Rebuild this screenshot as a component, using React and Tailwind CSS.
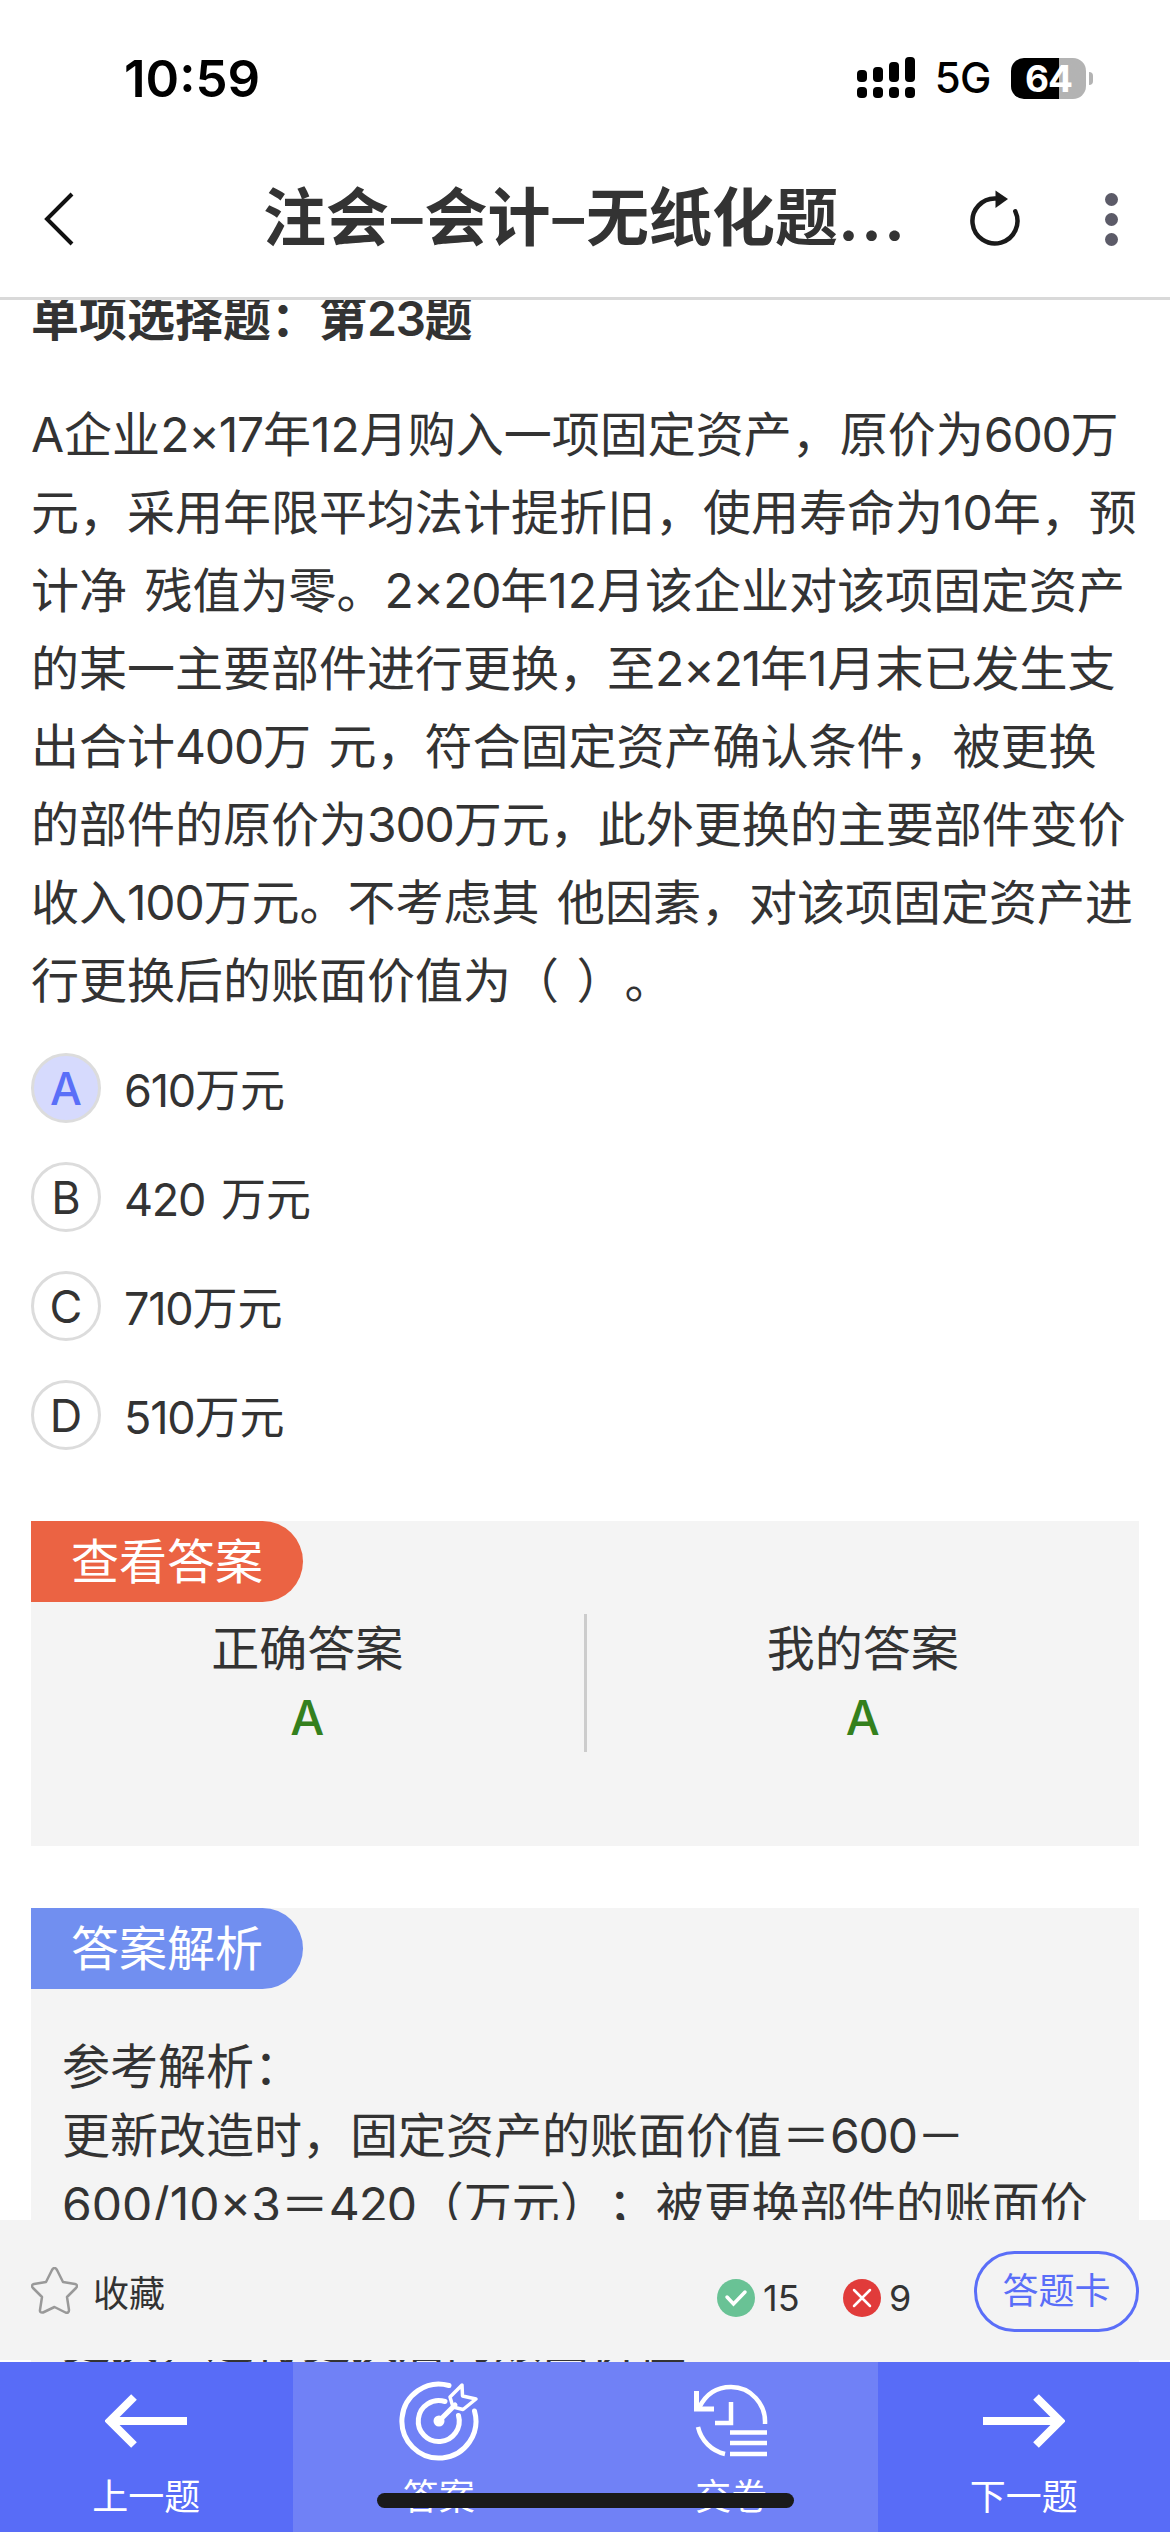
const question = [
  'A企业2×17年12月购入一项固定资产，原价为600万',
  '元，采用年限平均法计提折旧，使用寿命为10年，预',
  '计净 残值为零。2×20年12月该企业对该项固定资产',
  '的某一主要部件进行更换，至2×21年1月末已发生支',
  '出合计400万 元，符合固定资产确认条件，被更换',
  '的部件的原价为300万元，此外更换的主要部件变价',
  '收入100万元。不考虑其 他因素，对该项固定资产进',
  '行更换后的账面价值为（ ）。',
];

const options = [
  { key: 'A', text: '610万元', selected: true },
  { key: 'B', text: '420 万元' },
  { key: 'C', text: '710万元' },
  { key: 'D', text: '510万元' },
];

const analysis = [
  '参考解析：',
  '更新改造时，固定资产的账面价值＝600－',
  '600/10×3＝420（万元）；被更换部件的账面价',
];

// Tightens runs of three or more digits so they sit evenly between Chinese characters.
function Line({ text }) {
  return text.split(/([0-9×/]{3,})/).map((part, i) =>
    i % 2 === 1 && !part.includes('/') ? (
      <span key={i} className="tracking-[-1.2px]">
        {part}
      </span>
    ) : (
      part
    ),
  );
}

function StatusBar() {
  return (
    <div className="flex h-[156px] shrink-0 items-center pl-[124px] pr-[77px]">
      <span className="text-[51px] font-semibold leading-none text-black">10:59</span>
      <svg className="ml-auto" width="60" height="42" viewBox="0 0 60 42">
        <rect x="1" y="13" width="10" height="12" rx="4" />
        <rect x="17" y="10" width="10" height="15" rx="4" />
        <rect x="33" y="5" width="10" height="20" rx="4" />
        <rect x="49" y="0" width="10" height="25" rx="4" />
        <rect x="1" y="30" width="10" height="11" rx="4" />
        <rect x="17" y="30" width="10" height="11" rx="4" />
        <rect x="33" y="30" width="10" height="11" rx="4" />
        <rect x="49" y="30" width="10" height="11" rx="4" />
      </svg>
      <span className="ml-[19px] text-[42px] font-medium leading-none tracking-[-0.5px] text-black">5G</span>
      <div className="ml-[20px] flex h-[41px] w-[75px] items-center justify-center rounded-[13px] bg-linear-to-r from-black from-64% to-[#b3b3b3] to-64% text-[37px] font-bold leading-none tracking-[-1px] text-white">
        64
      </div>
      <div className="ml-[3px] h-[13px] w-1 rounded-r-full bg-[#b3b3b3]" />
    </div>
  );
}

function Header() {
  return (
    <div className="flex h-[144px] shrink-0 items-center border-b-3 border-[#d9d9d9] pb-[15px]">
      <svg className="ml-[42px]" width="34" height="56" viewBox="0 0 34 56" fill="none" stroke="#111" strokeWidth="4">
        <path d="M30 3L5 28l25 25" />
      </svg>
      <h1 className="-mt-1 ml-[187px] w-[651px] whitespace-nowrap text-[63px] font-bold leading-none text-[#333]">
        注会<span className="mx-[2px] font-medium">–</span>会计<span className="mx-[2px] font-medium">–</span>无纸化题
        <span className="tracking-[2px]">...</span>
      </h1>
      <svg className="-mt-2 ml-[51px]" width="60" height="64" viewBox="0 0 60 64" fill="none" stroke="#1a1a1a" strokeWidth="4.5">
        <path d="M50.300 28.400A22.500 22.500 0 1 1 31 15.500" strokeLinecap="round" />
        <path d="M30.500 7.500v17.500l12.500-9z" fill="#1a1a1a" stroke="none" />
      </svg>
      <div className="ml-[80px] flex flex-col gap-[7px]">
        <i className="size-[13px] rounded-full bg-[#5c5b68]" />
        <i className="size-[13px] rounded-full bg-[#5c5b68]" />
        <i className="size-[13px] rounded-full bg-[#5c5b68]" />
      </div>
    </div>
  );
}

function Badge({ className, children }) {
  return (
    <div className={`flex h-[81px] w-[272px] items-center rounded-r-full pl-10 text-[48px] leading-none text-white ${className}`}>
      {children}
    </div>
  );
}

function Result({ label }) {
  return (
    <div className="flex flex-1 flex-col items-center text-[48px]">
      <span className="leading-[69px]">{label}</span>
      <span className="font-[550] leading-[69px] text-[#34801d]">A</span>
    </div>
  );
}

function NavItem({ icon, label, className }) {
  return (
    <div className={`flex flex-1 flex-col items-center text-white ${className}`}>
      <div className="flex h-[117px] items-center">{icon}</div>
      <span className="text-[36px] leading-[36px]">{label}</span>
    </div>
  );
}

const arrowRight = (
  <svg width="82" height="54" viewBox="0 0 82 54" fill="none" stroke="currentColor" strokeWidth="8">
    <path d="M0 27h76M53 3l24 24-24 24" />
  </svg>
);

const arrowLeft = (
  <svg width="82" height="54" viewBox="0 0 82 54" fill="none" stroke="currentColor" strokeWidth="8">
    <path d="M82 27H6M29 3L5 27l24 24" />
  </svg>
);

const targetIcon = (
  <svg width="80" height="80" viewBox="0 0 80 80" fill="none" stroke="currentColor" strokeWidth="5" strokeLinecap="round">
    <path d="M50 4.500A37 37 0 1 0 75.500 30" />
    <path d="M46 20.500A20.500 20.500 0 1 0 59.500 34.500" />
    <path d="M40 40l16-16" />
    <circle cx="40" cy="40" r="5.500" fill="currentColor" stroke="none" />
    <path d="M63 4l.5 11L77 18 64 28.500 54 26 51 16z" strokeWidth="3.500" strokeLinejoin="round" />
  </svg>
);

const submitIcon = (
  <svg width="74" height="74" viewBox="0 0 74 74" fill="none" stroke="currentColor" strokeWidth="4.500">
    <path d="M71 40A34 35 0 0 0 37 3Q15 3 5 24" />
    <path d="M4 43a36 36 0 0 0 27 27" />
    <path d="M2.500 7v18H20" strokeWidth="5" />
    <path d="M37 18v21H21" />
    <path d="M36 48.500h37M36 59h37M36 70h37" />
  </svg>
);

export default function App() {
  return (
    <div className="relative flex h-[2532px] w-[1170px] flex-col overflow-hidden bg-white font-[Inter,'Noto_Sans_CJK_SC',sans-serif] text-[#333] [text-spacing-trim:space-all]">
      <StatusBar />
      <Header />

      <main className="h-[1920px] shrink-0 overflow-hidden px-[31px]">
        <h2 className="-mt-[16px] text-[48px] font-bold leading-[70px]">
          单项选择题：第<span className="font-semibold tracking-[-1.5px]">23</span>题
        </h2>
        <div className="mt-[42px] whitespace-pre text-[48px] leading-[78px] [word-spacing:4px]">
          {question.map((line) => (
            <p key={line}>
              <Line text={line} />
            </p>
          ))}
        </div>

        <div className="mt-[33px] flex flex-col gap-[39px]">
          {options.map((o) => (
            <div key={o.key} className="flex h-[70px] items-center">
              <span
                className={
                  o.selected
                    ? 'flex size-[70px] items-center justify-center rounded-full border-3 border-[#dcdcdc] bg-[#d6dafd] text-[45px] font-[550] leading-none text-[#5a6ff8]'
                    : 'flex size-[70px] items-center justify-center rounded-full border-3 border-[#dcdcdc] text-[45px] leading-none'
                }
              >
                {o.key}
              </span>
              <span className="ml-[23px] pt-1 text-[45px] leading-none [word-spacing:3px]">
                <Line text={o.text} />
              </span>
            </div>
          ))}
        </div>

        <section className="mt-[71px] h-[325px] bg-[#f4f4f4]">
          <Badge className="bg-[#eb6343]">查看答案</Badge>
          <div className="mt-3 flex">
            <Result label="正确答案" />
            <div className="h-[138px] w-[3px] bg-[#ccc]" />
            <Result label="我的答案" />
          </div>
        </section>

        <section className="mt-[62px] bg-[#f4f4f4]">
          <Badge className="bg-[#718ff0]">答案解析</Badge>
          <div className="mt-[43px] whitespace-pre pl-[31px] text-[48px] leading-[69px]">
            {analysis.map((line) => (
              <p key={line}>
                <Line text={line} />
              </p>
            ))}
          </div>
        </section>
      </main>

      <div className="flex h-[140px] shrink-0 items-center bg-[#f3f3f3] px-[31px]">
        <svg width="47" height="47" viewBox="0 0 47 47" fill="none" stroke="#999" strokeWidth="2.500" strokeLinejoin="round">
          <path d="M21 3q2.500-4 5 0l6 12 12 2q3.500 1 1 4l-9 9 2 13q0 3.500-3.500 2.500L23.500 40 12 45.500Q8.500 46 9 43l2-13-9-9q-2.500-3 1-4l12-2z" />
        </svg>
        <span className="ml-[15px] pt-2 text-[36px] leading-none">收藏</span>
        <svg className="ml-auto mt-4" width="38" height="38" viewBox="0 0 38 38" fill="none" stroke="#fff" strokeWidth="3.500" strokeLinecap="round">
          <circle cx="19" cy="19" r="19" fill="#69c295" stroke="none" />
          <path d="M10 18l6.500 7L28 13" />
        </svg>
        <span className="ml-2 mt-4 w-[80px] text-[36px] leading-none">15</span>
        <svg className="mt-4" width="38" height="38" viewBox="0 0 38 38" fill="none" stroke="#fff" strokeWidth="2.500" strokeLinecap="round">
          <circle cx="19" cy="19" r="19" fill="#e13b3a" stroke="none" />
          <path d="M11 11l16 16M27 11L11 27" />
        </svg>
        <span className="ml-2 mt-4 w-[85px] text-[36px] leading-none">9</span>
        <div className="mt-[2px] flex h-[81px] w-[165px] items-center justify-center rounded-full border-3 border-[#5a6ef8] text-[36px] leading-none text-[#5a6ef8]">
          答题卡
        </div>
      </div>

      {/* Sliver of the scrolled article between the tool bar and the navigation */}
      <div className="flex h-[2px] shrink-0 items-end overflow-hidden px-[31px]">
        <p className="mb-[-14px] w-full whitespace-pre bg-[#f4f4f4] pl-[31px] text-[48px] leading-[69px]">
          <Line text="更换，进行更换后的账面价值＝420－100－210" />
        </p>
      </div>

      <nav className="flex h-[170px] shrink-0">
        <NavItem className="bg-[#586cf7]" icon={arrowLeft} label="上一题" />
        <NavItem className="bg-[#7081f6]" icon={targetIcon} label="答案" />
        <NavItem className="bg-[#7081f6]" icon={submitIcon} label="交卷" />
        <NavItem className="bg-[#586cf7]" icon={arrowRight} label="下一题" />
      </nav>
      <div className="absolute left-[377px] top-[2493px] h-[15px] w-[417px] rounded-full bg-[#1a1a1a]" />
    </div>
  );
}
